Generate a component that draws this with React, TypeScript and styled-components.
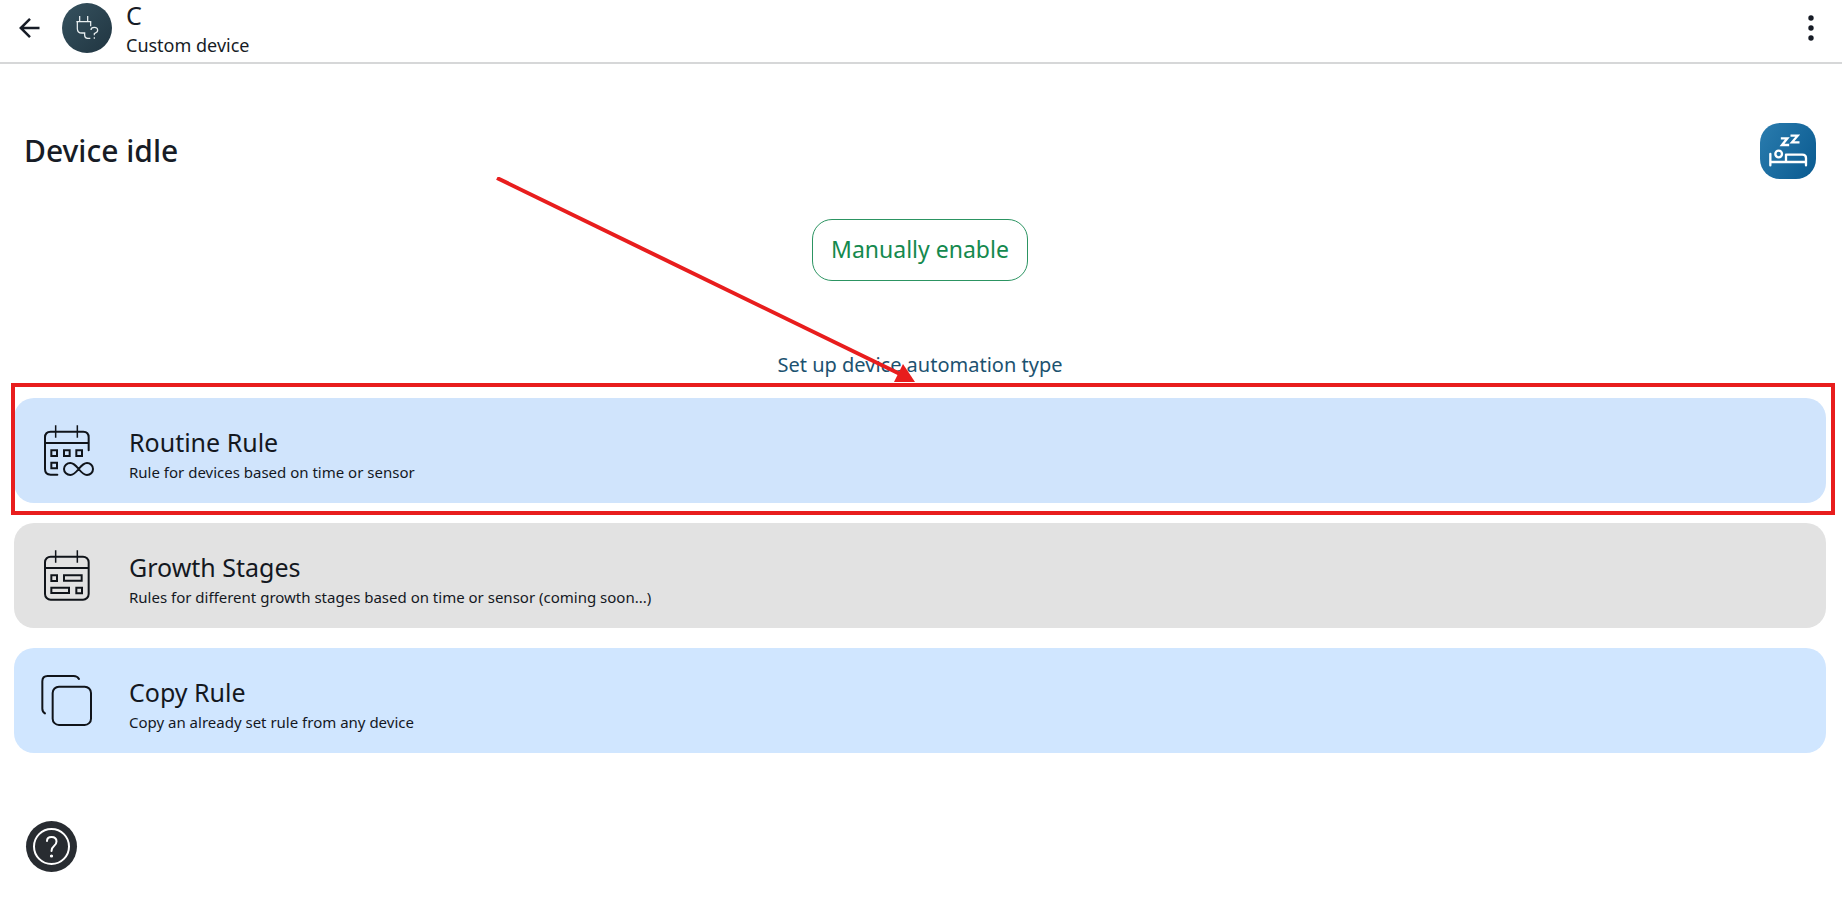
import React from "react";
import styled, { createGlobalStyle } from "styled-components";

const GlobalStyle = createGlobalStyle`
  * { box-sizing: border-box; }
  body { margin: 0; background: #fff; color: #171c26; font-family: "Noto Sans", sans-serif; }
  button { font-family: inherit; color: inherit; cursor: pointer; }
  h1, h2, p { margin: 0; font-weight: 400; }
`;

const Page = styled.div`
  display: flex;
  flex-direction: column;
  min-height: 100vh;
`;

const Header = styled.header`
  display: flex;
  align-items: center;
  height: 64px;
  padding: 0 13px 6px 12px;
  border-bottom: 2px solid #d6d7d8;
`;

const IconButton = styled.button`
  display: grid;
  place-items: center;
  width: 36px;
  height: 36px;
  padding: 0;
  border: 0;
  background: none;
`;

const Avatar = styled.span`
  display: block;
  width: 50px;
  height: 50px;
  margin: 0 14px;
  border-radius: 50%;
  overflow: hidden;
  background: linear-gradient(135deg, #36525f, #203541);
`;

const HeaderText = styled.div`
  flex: 1;
  padding-top: 2px;
`;

const DeviceName = styled.h1`
  font-size: 25px;
  line-height: 32px;
`;

const DeviceKind = styled.p`
  font-size: 18px;
  line-height: 28px;
`;

const Main = styled.main`
  display: flex;
  flex: 1;
  flex-direction: column;
  align-items: center;
  padding: 59px 16px 25px 14px;
`;

const Status = styled.section`
  display: flex;
  align-items: center;
  justify-content: space-between;
  width: 100%;
  padding: 0 10px;
`;

const StatusTitle = styled.h2`
  font-size: 30px;
  font-weight: 500;
  line-height: 40px;
`;

const StatusBadge = styled.span`
  width: 56px;
  height: 56px;
  border-radius: 20px;
  overflow: hidden;
  background: linear-gradient(120deg, #2a7cae, #0a5a90);
`;

const EnableButton = styled.button`
  height: 62px;
  margin-top: 40px;
  padding: 0 18px 2px;
  border: 1px solid #2c9462;
  border-radius: 20px;
  background: #fff;
  && { color: #14894e; }
  font-size: 23px;
`;

const SetupLabel = styled.p`
  position: relative;
  margin: 70px 0 19px;
  color: #1c5270;
  font-size: 20px;
  line-height: 28px;
`;

const Pointer = styled.svg`
  position: absolute;
  right: 146px;
  bottom: -6px;
  width: 420px;
  height: 208px;
  pointer-events: none;
`;

const RuleList = styled.div`
  display: flex;
  flex-direction: column;
  gap: 20px;
  width: 100%;
`;

const Highlight = styled.div`
  position: relative;
  &::after {
    content: "";
    position: absolute;
    inset: -15px -9px -12px -3px;
    border: 4px solid #e81d1d;
    pointer-events: none;
  }
`;

const RuleCard = styled.button<{ $tone: string }>`
  display: flex;
  align-items: center;
  gap: 35px;
  width: 100%;
  height: 105px;
  padding: 0 26px;
  border: 0;
  border-radius: 20px;
  background: ${(p) => p.$tone};
  && { color: #14181f; }
  text-align: left;
`;

const RuleText = styled.span`
  padding-top: 10px;
`;

const RuleTitle = styled.span`
  display: block;
  font-size: 25px;
  line-height: 32px;
`;

const RuleHint = styled.span`
  display: block;
  font-size: 15px;
  line-height: 28px;
`;

const RuleIcon = styled.svg`
  flex: none;
  width: 54px;
  height: 54px;
  fill: none;
  stroke: #10141a;
  stroke-width: 6;
  stroke-linecap: round;
`;

const HelpButton = styled.button`
  align-self: flex-start;
  width: 51px;
  height: 51px;
  margin: auto 0 0 12px;
  padding: 0;
  border: 0;
  border-radius: 50%;
  background: #282c31;
`;

const CalendarTop = () => (
  <>
    <path d="M45 99H176" strokeLinecap="butt" />
    <path d="M77 46V83M142 46V83" strokeWidth="4.5" strokeLinecap="butt" />
  </>
);

const RoutineIcon = () => (
  <RuleIcon viewBox="30 42 162 162" aria-hidden>
    <path d="M82 194H62Q45 194 45 177V82Q45 65 62 65H160Q176 65 176 82V121" />
    <CalendarTop />
    <path d="M64 121h17v17h-17zM102 121h17v17h-17zM139 121h17v17h-17zM64 158h17v17h-17z" />
    <path d="M146 177C138 167 131 159 121 159C111 159 102 167 102 177C102 187 111 195 121 195C131 195 138 187 146 177C154 167 161 159 171 159C181 159 189 167 189 177C189 187 181 195 171 195C161 195 154 187 146 177Z" />
  </RuleIcon>
);

const GrowthIcon = () => (
  <RuleIcon viewBox="30 42 162 162" aria-hidden>
    <rect x="45" y="65" width="131" height="129" rx="17" />
    <CalendarTop />
    <path d="M64 121h17v17h-17zM102 121h53v16h-53zM64 158h53v16h-53zM139 158h17v17h-17z" />
  </RuleIcon>
);

const CopyIcon = () => (
  <RuleIcon viewBox="30 42 162 162" aria-hidden>
    <rect x="68" y="80" width="115" height="115" rx="19" />
    <path d="M147 57Q142 48 131 48H53Q37 48 37 64V146Q37 155 45 160" />
  </RuleIcon>
);

const rules = [
  { title: "Routine Rule", hint: "Rule for devices based on time or sensor", tone: "#d0e4fc", Icon: RoutineIcon, marked: true },
  { title: "Growth Stages", hint: "Rules for different growth stages based on time or sensor (coming soon...)", tone: "#e2e2e2", Icon: GrowthIcon },
  { title: "Copy Rule", hint: "Copy an already set rule from any device", tone: "#d0e6ff", Icon: CopyIcon },
];

export default function App() {
  return (
    <Page>
      <GlobalStyle />
      <Header>
        <IconButton aria-label="Back">
          <svg width="24" height="24" viewBox="0 0 24 24" fill="none" stroke="#171c26" strokeWidth="2.5">
            <path d="M21.5 12H3.5M12 2.8L2.8 12L12 21.2" />
          </svg>
        </IconButton>
        <Avatar>
          <svg width="50" height="50" viewBox="186 9 150 150" fill="none" stroke="#e8eef0" strokeWidth="3.8" aria-hidden>
            <path d="M239 48V64M263 48V64M229 65H272V79M232 65V86Q232 99 246 99H254V106Q254 115 263 115H271M273 90Q273 82 283 82Q293 82 293 91Q293 97 283 101V106M283 112V116" />
          </svg>
        </Avatar>
        <HeaderText>
          <DeviceName>C</DeviceName>
          <DeviceKind>Custom device</DeviceKind>
        </HeaderText>
        <IconButton aria-label="More options">
          <svg width="8" height="28" viewBox="0 0 8 28" fill="#171c26">
            <circle cx="4" cy="4" r="2.7" />
            <circle cx="4" cy="14" r="2.7" />
            <circle cx="4" cy="24" r="2.7" />
          </svg>
        </IconButton>
      </Header>
      <Main>
        <Status>
          <StatusTitle>Device idle</StatusTitle>
          <StatusBadge>
            <svg width="56" height="56" viewBox="120 369 168 168" fill="none" stroke="#fff" strokeWidth="7" strokeLinecap="round" strokeLinejoin="round" aria-hidden>
              <path d="M186 415H202L186 435H204M215 407H233L216 427H235" strokeLinecap="square" strokeLinejoin="miter" />
              <path d="M151 462V496M151 486H258M258 496V474Q258 464 247 464H198V485" />
              <circle cx="176" cy="462" r="10" />
            </svg>
          </StatusBadge>
        </Status>
        <EnableButton>Manually enable</EnableButton>
        <SetupLabel>
          Set up device automation type
          <Pointer viewBox="0 0 420 208" aria-hidden>
            <path d="M1 1L404 197" stroke="#e81d1d" strokeWidth="4" />
            <path d="M419 205H398L407 187Z" fill="#e81d1d" />
          </Pointer>
        </SetupLabel>
        <RuleList>
          {rules.map(({ title, hint, tone, Icon, marked }) => {
            const card = (
              <RuleCard key={title} $tone={tone}>
                <Icon />
                <RuleText>
                  <RuleTitle>{title}</RuleTitle>
                  <RuleHint>{hint}</RuleHint>
                </RuleText>
              </RuleCard>
            );
            return marked ? <Highlight key={title}>{card}</Highlight> : card;
          })}
        </RuleList>
        <HelpButton aria-label="Help">
          <svg width="51" height="51" viewBox="0 0 51 51" fill="none" stroke="#fff" strokeWidth="2" strokeLinecap="round">
            <circle cx="25.5" cy="25.5" r="17.5" />
            <path d="M21 20Q21 16 25.5 16Q30.5 16 30.5 20.5Q30.5 23 28 25Q25.500 27 25.5 30" />
            <circle cx="25.5" cy="35" r="1" fill="#fff" strokeWidth="1.2" />
          </svg>
        </HelpButton>
      </Main>
    </Page>
  );
}
